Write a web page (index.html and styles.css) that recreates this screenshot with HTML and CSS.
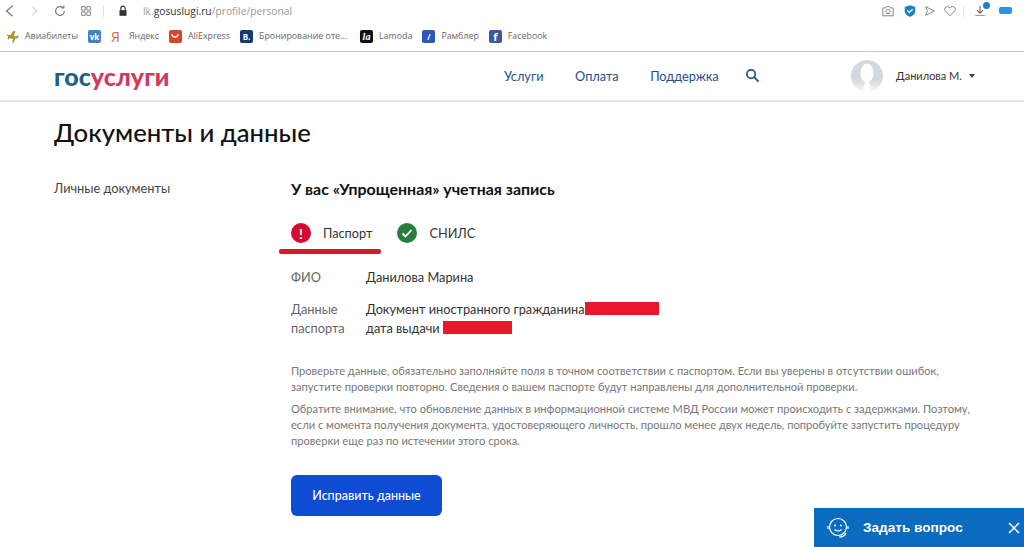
FILE: index.html
```html
<!DOCTYPE html>
<html lang="ru">
<head>
    <meta charset="UTF-8">
    <title>Документы и данные</title>
    <link rel="stylesheet" href="styles.css">
</head>
<body>
    <div class="browser">
        <div class="toolbar">
            <svg class="tool-icon" viewBox="0 0 16 16"><path d="M11 2 4 8l7 6" fill="none" stroke="#777" stroke-width="1.300"/></svg>
            <svg class="tool-icon tool-next" viewBox="0 0 16 16"><path d="M6 3l5 5-5 5" fill="none" stroke="#d5d5d5" stroke-width="1.300"/></svg>
            <svg class="tool-icon tool-reload" viewBox="0 0 16 16"><path d="M13 8a5 5 0 1 1-1.500-3.600" fill="none" stroke="#777" stroke-width="1.300"/><path d="M13 1.500V5H9.500z" fill="#777"/></svg>
            <svg class="tool-icon tool-grid" viewBox="0 0 16 16"><path d="M3 3h4v4H3zM9 3h4v4H9zM3 9h4v4H3zM9 9h4v4H9z" fill="none" stroke="#777"/></svg>
            <span class="tool-sep"></span>
            <svg class="tool-icon" viewBox="0 0 16 16"><path d="M5.500 7V5a2.500 2.500 0 0 1 5 0v2" fill="none" stroke="#333" stroke-width="1.300"/><path d="M4 7h8v6.500H4z" fill="#333"/></svg>
            <div class="url">lk.<b>gosuslugi.ru</b>/profile/personal</div>
            <div class="tool-right">
                <svg class="tool-icon" viewBox="0 0 16 16"><path d="M2 4.500h3l1-1.500h4l1 1.500h3v9H2z" fill="none" stroke="#777"/><circle cx="8" cy="8.500" r="2.500" fill="none" stroke="#777"/></svg>
                <svg class="tool-icon tool-shield" viewBox="0 0 16 16"><path d="M8 1.500l6 2v5c0 3-3 5-6 6-3-1-6-3-6-6v-5z" fill="#1b80c8"/><path d="M5 7.500l2.200 2.200L11 6" fill="none" stroke="#fff" stroke-width="1.500"/></svg>
                <svg class="tool-icon" viewBox="0 0 16 16"><path d="M3 3l10 5-10 5 2-5z" fill="none" stroke="#777"/></svg>
                <svg class="tool-icon" viewBox="0 0 16 16"><path d="M8 13.500 2.800 8.200a3 3 0 0 1 0-4.300 3 3 0 0 1 4.300 0l.9.900.9-.9a3 3 0 0 1 4.300 0 3 3 0 0 1 0 4.300z" fill="none" stroke="#777"/></svg>
                <span class="tool-sep"></span>
                <span class="download">
                    <svg class="tool-icon" viewBox="0 0 16 16"><path d="M8 2v8M4.500 7 8 10.500 11.500 7" fill="none" stroke="#666" stroke-width="1.200"/><path d="M2.500 13h11" stroke="#c98a66" stroke-width="1.200"/></svg>
                    <i class="download-dot"></i>
                </span>
                <span class="battery"></span>
            </div>
        </div>
        <div class="bookmarks">
            <div class="mark"><svg class="mark-icon" viewBox="0 0 16 16"><path d="M1 6l5 1 4-5 2 .5-2 5.500 3 .5 1.500-1.500 1 .5-1 3-3 .5-1.500 5-1.500-.5.500-4.500-4-.5-1 1.500-1-.5.500-3z" fill="#a8962c"/></svg>Авиабилеты</div>
            <div class="mark"><span class="mark-box mark-vk">vk</span></div>
            <div class="mark"><span class="mark-ya">Я</span>Яндекс</div>
            <div class="mark"><span class="mark-box mark-ali"><svg viewBox="0 0 12 12"><path d="M3 4c0 4 6 4 6 0" fill="none" stroke="#fff" stroke-width="1.300"/></svg></span>AliExpress</div>
            <div class="mark mark-long"><span class="mark-box mark-booking">B.</span>Бронирование оте...</div>
            <div class="mark"><span class="mark-box mark-la">la</span>Lamoda</div>
            <div class="mark"><span class="mark-box mark-rambler">/</span>Рамблер</div>
            <div class="mark"><span class="mark-box mark-fb">f</span>Facebook</div>
        </div>
    </div>

    <header class="site-header">
        <div class="logo"><span class="logo-gos">гос</span><span class="logo-usl">услуги</span></div>
        <nav class="nav">
            <a>Услуги</a>
            <a>Оплата</a>
            <a>Поддержка</a>
            <svg class="search" viewBox="0 0 16 16"><circle cx="6.500" cy="6.500" r="4.500" fill="none" stroke="#1f4f8f" stroke-width="1.800"/><path d="M10 10l4.500 4.500" stroke="#1f4f8f" stroke-width="2"/></svg>
        </nav>
        <div class="user">
            <svg class="avatar" viewBox="0 0 32 32">
                <defs><linearGradient id="avatarFade" x1="0" y1="0" x2="0" y2="1"><stop offset="0.600" stop-color="#d3d7df"/><stop offset="1" stop-color="#f6f7f9"/></linearGradient></defs>
                <circle cx="16" cy="16" r="16" fill="url(#avatarFade)"/>
                <ellipse cx="16" cy="13" rx="6.500" ry="9.500" fill="#fff"/>
                <path d="M12 32c.5-6 1.500-10 4-11 2.500 1 3.500 5 4 11z" fill="#fff"/>
            </svg>
            <span class="user-name">Данилова М.</span>
            <span class="caret"></span>
        </div>
    </header>

    <main class="page">
        <h1>Документы и данные</h1>
        <div class="columns">
            <aside class="side">Личные документы</aside>
            <section class="content">
                <h2>У вас «Упрощенная» учетная запись</h2>
                <div class="checks">
                    <div class="check check-bad">
                        <span class="dot dot-bad">!</span>Паспорт
                        <i class="scribble"></i>
                    </div>
                    <div class="check">
                        <span class="dot dot-ok"><svg viewBox="0 0 20 20"><path d="M5.500 10.500l3 3 6-6.500" fill="none" stroke="#fff" stroke-width="1.800"/></svg></span>СНИЛС
                    </div>
                </div>
                <dl class="info">
                    <dt>ФИО</dt>
                    <dd>Данилова Марина</dd>
                    <dt>Данные паспорта</dt>
                    <dd>Документ иностранного гражданина<i class="redact redact-long"></i><br>дата выдачи <i class="redact redact-short"></i></dd>
                </dl>
                <p class="note">Проверьте данные, обязательно заполняйте поля в точном соответствии с паспортом. Если вы уверены в отсутствии ошибок, запустите проверки повторно. Сведения о вашем паспорте будут направлены для дополнительной проверки.</p>
                <p class="note">Обратите внимание, что обновление данных в информационной системе МВД России может происходить с задержками. Поэтому, если с момента получения документа, удостоверяющего личность, прошло менее двух недель, попробуйте запустить процедуру проверки еще раз по истечении этого срока.</p>
                <button class="fix-btn">Исправить данные</button>
            </section>
        </div>
    </main>

    <div class="ask">
        <svg class="ask-icon" viewBox="0 0 26 26"><circle cx="13" cy="12" r="8.500" fill="none" stroke="#fff" stroke-width="1.200"/><circle cx="10" cy="10.500" r="1" fill="#fff"/><circle cx="16" cy="10.500" r="1" fill="#fff"/><path d="M9.500 14.500c2 2 5 2 7 0M3 11v3M23 11v3M21 18c-1 3-4 4-7 4" fill="none" stroke="#fff" stroke-width="1.200"/></svg>
        <span class="ask-text">Задать вопрос</span>
        <svg class="ask-close" viewBox="0 0 12 12"><path d="M1 1l10 10M11 1 1 11" stroke="#fff" stroke-width="1.500"/></svg>
    </div>
</body>
</html>
```

FILE: styles.css
```css
* {
    box-sizing: border-box;
}
html, body {
    height: 100%;
}
body {
    margin: 0;
    background-color: #fff;
    color: #222;
    font-family: "Lato", "Open Sans", "Noto Sans", sans-serif;
    overflow: hidden;
    position: relative;
}

/* browser chrome */
.browser {
    height: 52px;
    border-bottom: 1px solid #c8c8c8;
}
.toolbar {
    height: 21px;
    display: flex;
    align-items: center;
    padding-left: 3px;
}
.tool-icon {
    width: 14px;
    height: 14px;
    flex: none;
}
.tool-next {
    margin-left: 10px;
}
.tool-reload {
    margin-left: 12px;
}
.tool-grid {
    margin-left: 12px;
}
.tool-sep {
    width: 1px;
    height: 12px;
    background-color: #e2e2e2;
    margin: 0 12px 0 10px;
}
.url {
    margin-left: 13px;
    font-size: 10.250px;
    color: #999;
    font-family: "Open Sans", sans-serif;
}
.url b {
    font-weight: 400;
    color: #333;
}
.tool-right {
    margin-left: auto;
    display: flex;
    align-items: center;
    gap: 6px;
    padding-right: 12px;
}
.tool-right .tool-sep {
    margin: 0 3px 0 0;
}
.tool-shield {
    margin-left: 2px;
}
.download {
    position: relative;
    display: flex;
}
.download-dot {
    position: absolute;
    top: -2px;
    right: -3px;
    width: 7px;
    height: 7px;
    border-radius: 50%;
    background-color: #1b80c8;
}
.battery {
    width: 13px;
    height: 7px;
    border-radius: 2px;
    background-color: #2b93e0;
    margin-left: 6px;
}
.bookmarks {
    height: 30px;
    display: flex;
    align-items: center;
    padding-left: 5px;
    font-size: 8.850px;
    color: #666;
    font-family: "Open Sans", sans-serif;
}
.mark {
    display: flex;
    align-items: center;
    gap: 6px;
    margin-right: 10px;
    white-space: nowrap;
}
.mark-long {
    margin-right: 13px;
}
.mark-icon {
    width: 14px;
    height: 14px;
}
.mark-box {
    width: 13px;
    height: 13px;
    border-radius: 2px;
    display: flex;
    align-items: center;
    justify-content: center;
    color: #fff;
    font-size: 8px;
    font-weight: 700;
}
.mark-ya {
    color: #d9603a;
    font-size: 14px;
    margin-right: 3px;
}
.mark-vk { background-color: #3f83c4; }
.mark-ali { background-color: #d8452a; }
.mark-booking { background-color: #143a73; }
.mark-la { background-color: #111; font-family: "Liberation Serif", serif; font-style: italic; font-size: 10px; }
.mark-rambler { background-color: #2f55b8; }
.mark-fb { background-color: #3b5a9a; font-size: 11px; }
.mark-ali svg {
    width: 12px;
    height: 12px;
}

/* site header */
.site-header {
    height: 50px;
    display: flex;
    align-items: center;
    padding: 0 0 1px 54px;
    border-bottom: 2px solid #e4e4e4;
}
.logo {
    font-size: 25px;
    font-weight: 900;
    width: 450px;
}
.logo-gos {
    color: #1f5f86;
}
.logo-usl {
    color: #d13a5a;
}
.nav {
    display: flex;
    align-items: center;
    gap: 31.500px;
    font-size: 12.750px;
    color: #1f4f8f;
}
.search {
    width: 15px;
    height: 15px;
    margin-left: -5px;
}
.user {
    margin-left: 91px;
    display: flex;
    align-items: center;
    font-size: 11px;
    color: #333;
}
.avatar {
    width: 32px;
    height: 32px;
    margin-right: 13px;
}
.caret {
    margin-left: 7px;
    border: 3px solid transparent;
    border-top: 4px solid #444;
    border-bottom: 0;
}

/* page */
.page {
    padding-left: 54px;
}
h1 {
    margin: 0;
    padding-top: 14px;
    font-family: "Lato Medium", "Lato", sans-serif;
    font-size: 25.700px;
    font-weight: 500;
    line-height: 32px;
    color: #111;
}
.columns {
    display: flex;
    margin-top: 31px;
}
.side {
    width: 237px;
    font-size: 12.750px;
    color: #444;
    padding-top: 1px;
}
.content {
    width: 682px;
}
h2 {
    margin: 0;
    font-size: 15.900px;
    font-weight: 700;
    line-height: 20px;
    color: #111;
}
.checks {
    display: flex;
    margin-top: 24px;
}
.check {
    display: flex;
    align-items: center;
    font-size: 12.750px;
    color: #333;
}
.check-bad {
    position: relative;
    margin-right: 25px;
}
.dot {
    width: 20px;
    height: 20px;
    border-radius: 50%;
    margin-right: 12px;
    display: flex;
    align-items: center;
    justify-content: center;
    color: #fff;
    font-weight: 700;
    font-size: 14px;
}
.dot-bad {
    background-color: #d4092e;
}
.dot-ok {
    background-color: #2a7d3f;
}
.dot svg {
    width: 20px;
    height: 20px;
}
.scribble {
    position: absolute;
    left: -12px;
    top: 26px;
    width: 102px;
    height: 5px;
    border-radius: 2px;
    background-color: #d01c30;
}
.info {
    margin: 25px 0 0;
    display: grid;
    grid-template-columns: 75px 1fr;
    row-gap: 13px;
    font-size: 12.750px;
    line-height: 19px;
}
.info dt {
    color: #666;
}
.info dd {
    margin: 0;
    color: #333;
}
.redact {
    display: inline-block;
    height: 13px;
    vertical-align: -1px;
    background-color: #e8192c;
}
.redact-long {
    width: 74px;
}
.redact-short {
    width: 69px;
}
.note {
    margin: 0 0 6px;
    font-size: 11.120px;
    line-height: 16px;
    color: #777;
}
.info + .note {
    margin-top: 25px;
}
.fix-btn {
    display: block;
    margin-top: 26px;
    width: 151px;
    height: 41px;
    border: none;
    border-radius: 6px;
    background-color: #0d4cd3;
    color: #fff;
    font-family: inherit;
    font-size: 12.500px;
    font-weight: 500;
}

/* chat widget */
.ask {
    position: absolute;
    right: 0;
    bottom: 0;
    width: 210px;
    height: 39px;
    display: flex;
    align-items: center;
    background-color: #0b6cbf;
    color: #fff;
    padding-left: 11px;
}
.ask-icon {
    width: 26px;
    height: 26px;
}
.ask-text {
    margin-left: 12px;
    font-size: 13.600px;
    font-weight: 700;
    font-family: "Liberation Sans", sans-serif;
}
.ask-close {
    width: 12px;
    height: 12px;
    margin-left: auto;
    margin-right: 4px;
}
```
